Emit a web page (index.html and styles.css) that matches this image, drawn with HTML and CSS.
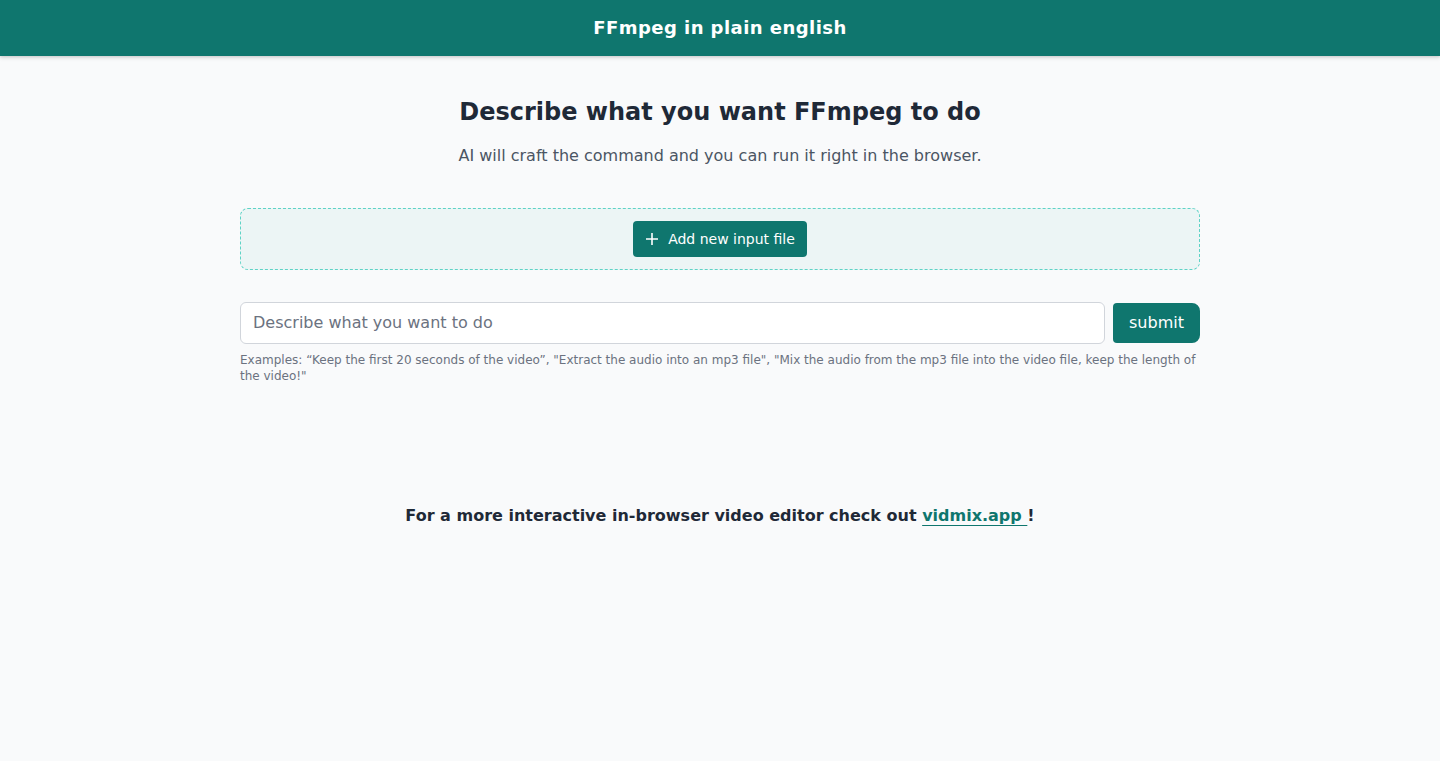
FILE: index.html
```html
<!DOCTYPE html>
<html lang="en">
<head>
<meta charset="utf-8">
<title>FFmpeg in plain english</title>
<link rel="stylesheet" href="styles.css">
</head>
<body>
<header class="topbar">
  <h1 class="brand">FFmpeg in plain english</h1>
</header>
<main class="container">
  <section class="intro">
    <h2 class="title">Describe what you want FFmpeg to do</h2>
    <p class="subtitle">AI will craft the command and you can run it right in the browser.</p>
  </section>
  <div class="dropzone">
    <button class="add-btn" type="button">
      <svg class="plus" width="14" height="14" viewBox="0 0 14 14" aria-hidden="true"><path d="M7 1v12M1 7h12" stroke="currentColor" stroke-width="1.6" fill="none"/></svg>
      Add new input file
    </button>
  </div>
  <form class="prompt-row">
    <input class="prompt" type="text" placeholder="Describe what you want to do">
    <button class="submit" type="button">submit</button>
  </form>
  <p class="examples">Examples: “Keep the first 20 seconds of the video”, "Extract the audio into an mp3 file", "Mix the audio from the mp3 file into the video file, keep the length of the video!"</p>
  <p class="footer-note">For a more interactive in-browser video editor check out <a class="link" href="#">vidmix.app </a>!</p>
</main>
</body>
</html>
```
FILE: styles.css
```css
* { box-sizing: border-box; }
html, body { margin: 0; padding: 0; }
body {
  background: #f9fafb;
  font-family: "DejaVu Sans", sans-serif;
  color: #1f2937;
  min-height: 761px;
}
.topbar {
  height: 56px;
  background: #0f766e;
  display: flex;
  align-items: center;
  justify-content: center;
  box-shadow: 0 2px 4px rgba(0,0,0,0.12), 0 1px 2px rgba(0,0,0,0.08);
}
.brand {
  margin: 0;
  color: #fff;
  font-size: 18px;
  font-weight: bold;
  line-height: 28px;
  letter-spacing: 0.025em;
}
.container {
  width: 960px;
  margin: 0 auto;
  padding-top: 40px;
}
.intro { text-align: center; }
.title {
  margin: 0;
  font-size: 24px;
  line-height: 32px;
  font-weight: bold;
  color: #1f2937;
}
.subtitle {
  margin: 16px 0 0;
  font-size: 16px;
  line-height: 24px;
  color: #4b5563;
}
.dropzone {
  margin-top: 40px;
  height: 62px;
  border: 1px dashed #5ed3c6;
  border-radius: 8px;
  background: #ecf5f5;
  display: flex;
  align-items: center;
  justify-content: center;
}
.add-btn {
  height: 36px;
  width: 174px;
  display: flex;
  align-items: center;
  justify-content: center;
  gap: 9px;
  background: #0f766e;
  color: #fff;
  border: 0;
  border-radius: 4px;
  font-family: "DejaVu Sans", sans-serif;
  font-size: 14px;
  padding: 0 12px;
}
.plus { display: block; }
.prompt-row {
  margin-top: 32px;
  display: flex;
  gap: 8px;
  align-items: center;
}
.prompt {
  flex: 1;
  height: 42px;
  border: 1px solid #d1d5db;
  border-radius: 6px;
  background: #fff;
  padding: 0 12px 2px;
  font-family: "DejaVu Sans", sans-serif;
  font-size: 16px;
  color: #1f2937;
}
.prompt::placeholder { color: #6b7280; }
.submit {
  width: 87px;
  height: 40px;
  background: #0f766e;
  color: #fff;
  border: 0;
  border-radius: 4px 8px 8px 4px;
  font-family: "DejaVu Sans", sans-serif;
  font-size: 16px;
  padding: 0 0 2px;
}
.examples {
  margin: 8px 0 0;
  font-size: 12px;
  line-height: 16px;
  color: #6b7280;
}
.footer-note {
  margin: 120px 0 0;
  text-align: center;
  font-size: 16px;
  line-height: 24px;
  font-weight: bold;
  color: #1f2937;
}
.link {
  color: #0f766e;
  text-decoration: underline;
  text-underline-offset: 4px;
}
```
